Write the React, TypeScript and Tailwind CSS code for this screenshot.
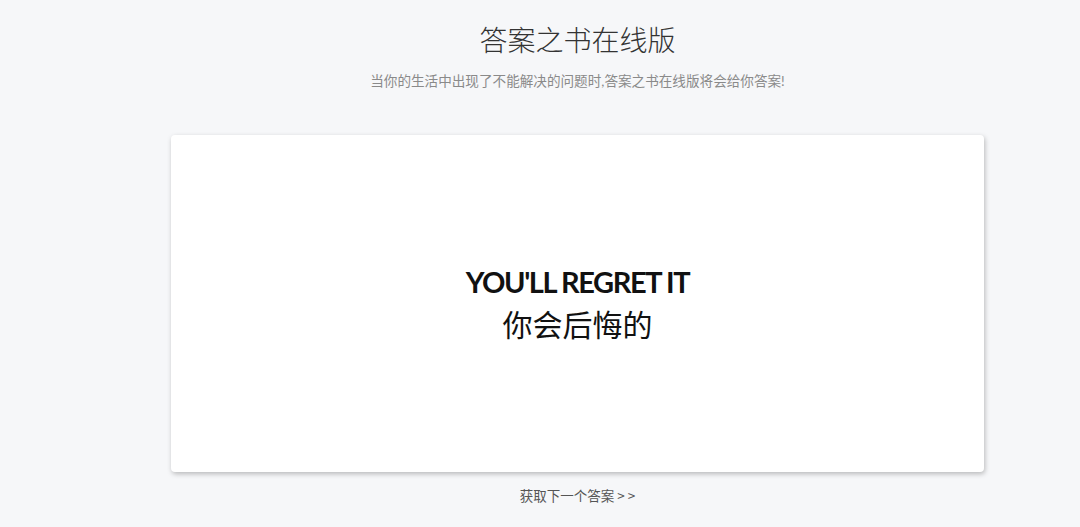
export default function App() {
  return (
    <div className="min-h-[527px] w-[1080px] bg-[#f6f7f9] font-['Lato','Noto_Sans_CJK_SC',sans-serif]">
      <div className="ml-[171px] flex w-[813px] flex-col items-center">
        <h1 className="mt-[22px] text-[28px] leading-[34px] text-[#333] font-['Noto_Sans_CJK_SC',sans-serif] font-light">
          答案之书在线版
        </h1>
        <p className="mt-[16px] text-[13.6px] leading-[18px] text-[#8a8a8a]">
          当你的生活中出现了不能解决的问题时,答案之书在线版将会给你答案!
        </p>
        <section className="mt-[45px] flex h-[337px] w-[813px] flex-col items-center justify-center rounded-[4px] bg-white shadow-[1px_2px_5px_rgba(0,0,0,0.25)]">
          <div className="text-[29px] font-bold leading-[34px] tracking-[-1.4px] text-[#111]">
            YOU'LL REGRET IT
          </div>
          <div className="mt-[4px] font-['Noto_Sans_CJK_SC',sans-serif] text-[30px] leading-[40px] text-[#111]">
            你会后悔的
          </div>
        </section>
        <a className="mt-[14px] text-[13.5px] leading-[18px] text-[#555] font-['Noto_Sans_CJK_SC',sans-serif]">
          获取下一个答案 &gt; &gt;
        </a>
      </div>
    </div>
  );
}
